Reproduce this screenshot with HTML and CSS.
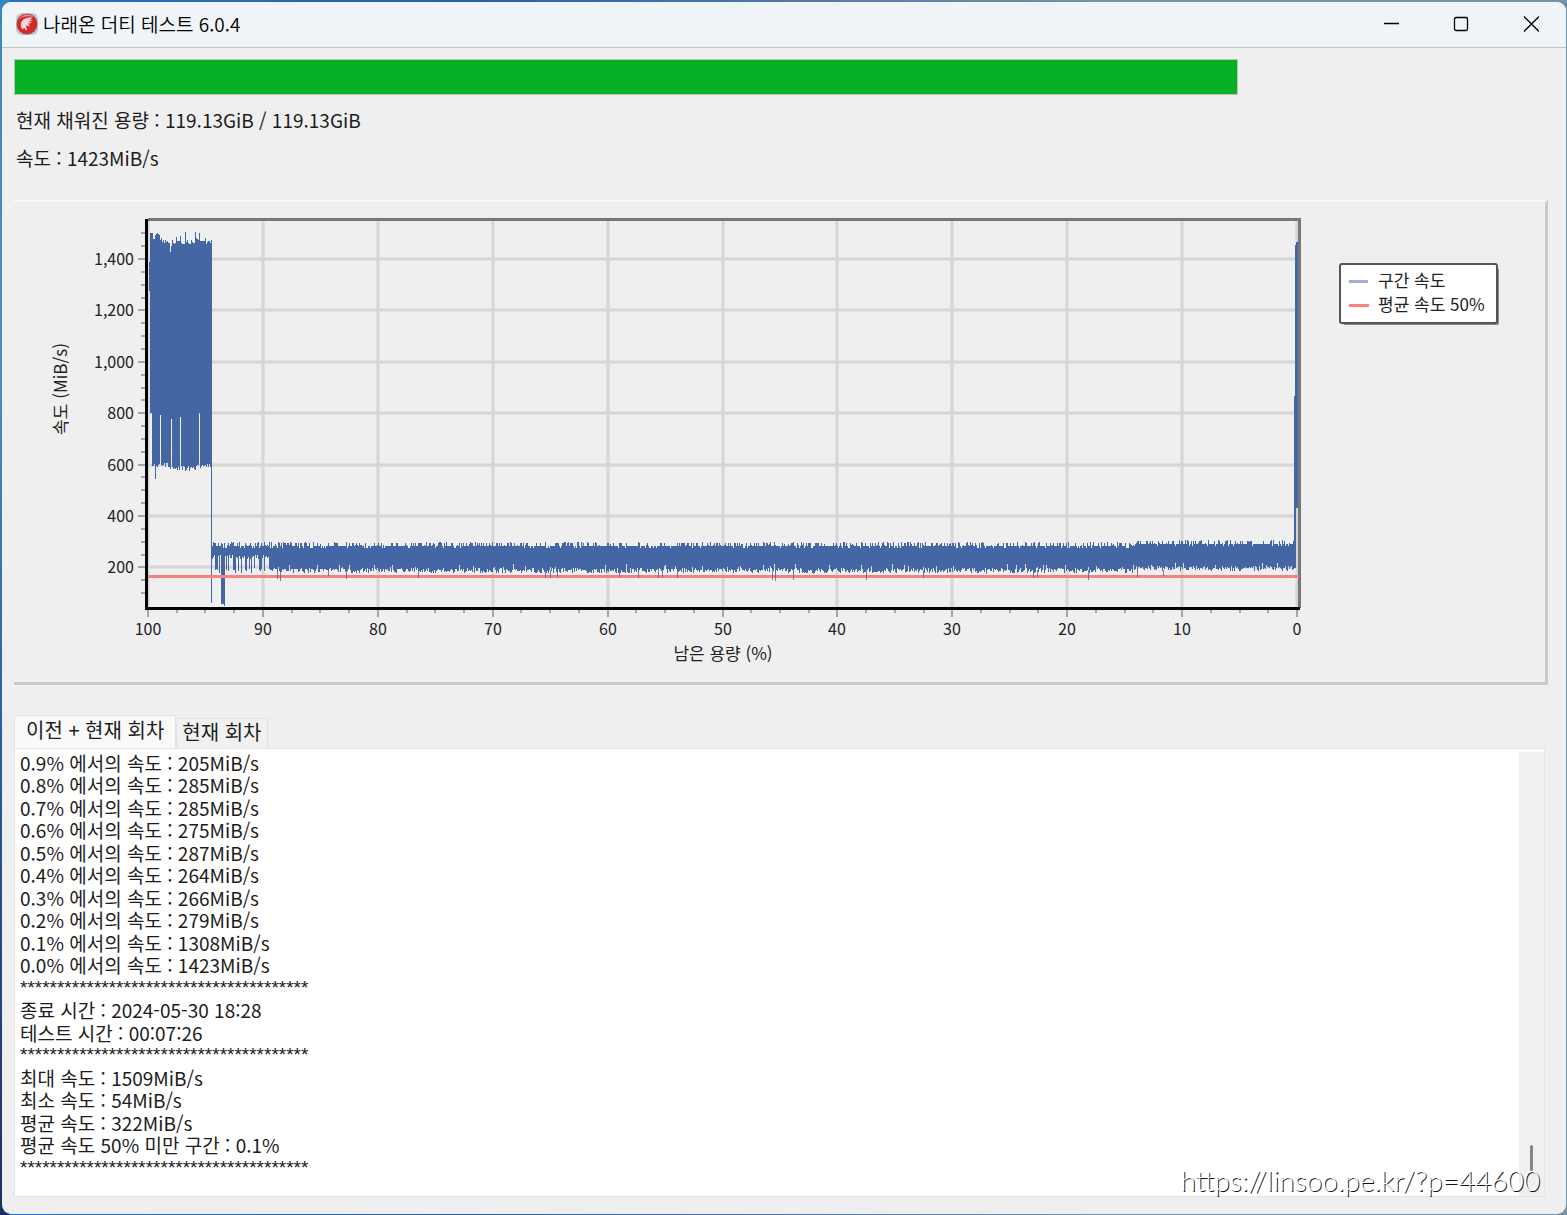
FILE: index.html
```html
<!DOCTYPE html>
<html lang="ko">
<head>
<meta charset="utf-8">
<meta name="viewport" content="width=device-width, initial-scale=1">
<title>나래온 더티 테스트 6.0.4</title>
<link rel="stylesheet" href="styles.css">
</head>
<body>
<div class="window">
  <header class="titlebar">
    <svg class="app-icon" viewBox="0 0 24 24" aria-hidden="true">
      <rect x="1" y="1" width="22" height="22" rx="6" fill="#c9c5c5"/>
      <circle cx="12" cy="12" r="10.500" fill="#8f6264"/>
      <circle cx="12" cy="12" r="9.800" fill="#d9252c"/>
      <path d="M4 8a9 9 0 0 1 15-2.500C14 3.500 7 4 4 8z" fill="#ef8587"/>
      <path d="M17.500 5.500c-5-.5-10 1-11.500 5.500-.8 3 .2 5.500 2 6.500l1-2 2 3 1-.5-1-4.500 4 1-2-3 4-.5-3-1.500 4-1.500-3-.5z" fill="#f9d5d3"/>
    </svg>
    <h1 class="title">나래온 더티 테스트 6.0.4</h1>
    <div class="controls">
      <button class="control" type="button" aria-label="최소화"><svg viewBox="0 0 16 16"><path d="M1 7.500h15"/></svg></button>
      <button class="control" type="button" aria-label="최대화"><svg viewBox="0 0 16 16"><rect x="1.500" y="1.500" width="13" height="13" rx="1.500"/></svg></button>
      <button class="control" type="button" aria-label="닫기"><svg viewBox="0 0 16 16"><path d="M1 .5l15 15M16 .5L1 15.500"/></svg></button>
    </div>
  </header>

  <main class="content">
    <progress class="fill-progress" max="100" value="100" aria-label="진행률"></progress>
    <p class="status">현재 채워진 용량 : 119.13GiB / 119.13GiB</p>
    <p class="status">속도 : 1423MiB/s</p>

    <section class="chart-panel">
      <svg class="chart" viewBox="0 0 1531 480" role="img" aria-label="남은 용량에 따른 속도">
        <g id="grid" class="grid"></g>
        <g id="ticks" class="ticks"></g>
        <path class="frame" d="M134 17.500H1285.500V406"/>
        <path id="speed" class="speed"/>
        <path class="average" d="M134 374.500H1285"/>
        <path id="dips" class="dips"/>
        <path class="axis" d="M132.500 17V406.500H1286"/>
        <g id="labels" class="labels"></g>
        <text class="caption" x="709" y="458" text-anchor="middle">남은 용량 (%)</text>
        <text class="caption" transform="translate(53 187) rotate(-90)" text-anchor="middle">속도 (MiB/s)</text>
        <rect class="legend-shadow" x="1329" y="66" width="156" height="57" rx="2"/>
        <rect class="legend-box" x="1326" y="62" width="157" height="59" rx="2"/>
        <path class="legend-speed" d="M1335 79.500h19"/>
        <path class="legend-average" d="M1335 103.500h20"/>
        <text class="caption" x="1364" y="85">구간 속도</text>
        <text class="caption" x="1364" y="109">평균 속도 50%</text>
      </svg>
    </section>

    <section class="log">
      <div class="tabs" role="tablist">
        <button class="tab tab-active" type="button" role="tab" aria-selected="true">이전 + 현재 회차</button>
        <button class="tab" type="button" role="tab" aria-selected="false">현재 회차</button>
      </div>
      <div class="log-page">
        <div class="log-text" role="log" aria-label="테스트 기록" tabindex="0">
          <p>0.9% 에서의 속도 : 205MiB/s</p>
          <p>0.8% 에서의 속도 : 285MiB/s</p>
          <p>0.7% 에서의 속도 : 285MiB/s</p>
          <p>0.6% 에서의 속도 : 275MiB/s</p>
          <p>0.5% 에서의 속도 : 287MiB/s</p>
          <p>0.4% 에서의 속도 : 264MiB/s</p>
          <p>0.3% 에서의 속도 : 266MiB/s</p>
          <p>0.2% 에서의 속도 : 279MiB/s</p>
          <p>0.1% 에서의 속도 : 1308MiB/s</p>
          <p>0.0% 에서의 속도 : 1423MiB/s</p>
          <p class="rule">***************************************</p>
          <p>종료 시간 : 2024-05-30 18:28</p>
          <p>테스트 시간 : 00:07:26</p>
          <p class="rule">***************************************</p>
          <p>최대 속도 : 1509MiB/s</p>
          <p>최소 속도 : 54MiB/s</p>
          <p>평균 속도 : 322MiB/s</p>
          <p>평균 속도 50% 미만 구간 : 0.1%</p>
          <p class="rule">***************************************</p>
        </div>
        <div class="scrollbar"><div class="thumb"></div></div>
      </div>
    </section>
  </main>
  <a class="watermark" href="https://linsoo.pe.kr/?p=44600">https://linsoo.pe.kr/?p=44600</a>
</div>
<script src="chart.js"></script>
</body>
</html>
```

FILE: styles.css
```css
* {
  box-sizing: border-box;
}

html,
body {
  height: 100%;
}

body {
  margin: 0;
  padding: 2px 1px 1px 2px;
  background:
    linear-gradient(#3c86c0, #4a90c0 30%, #2a5cab 60%, #1c2f66) left / 9px 100% no-repeat,
    linear-gradient(to right, #2b71c4, #2b5ea9 30%, #7890a8 70%, #7890a8);
  color: #1c1c1c;
  font-family: "Noto Sans CJK KR", "Noto Sans", sans-serif;
  font-size: 19px;
}

.window {
  position: relative;
  display: flex;
  flex-direction: column;
  min-height: 100%;
  overflow: hidden;
  border-radius: 9px;
  background: #efefef;
}

.titlebar {
  display: flex;
  align-items: center;
  height: 46px;
  padding-bottom: 2px;
  padding-left: 13px;
  border-bottom: 1px solid #bfc5ca;
  background: #eff4f9;
  color: #000;
}

.app-icon {
  width: 24px;
  height: 24px;
}

.title {
  flex: 1;
  margin: 0 0 0 4px;
  font-size: 19px;
  font-weight: 350;
  line-height: 24px;
}

.controls {
  display: flex;
}

.control {
  display: grid;
  place-items: center;
  width: 70px;
  height: 43px;
  padding: 0;
  border: 0;
  background: none;
}

.control svg {
  width: 16px;
  height: 16px;
  fill: none;
  stroke: #000;
  stroke-width: 1.300;
}

.content {
  display: flex;
  flex: 1;
  flex-direction: column;
  padding: 11px 18px 17px 12px;
}

.fill-progress {
  width: calc(80% - 3px);
  height: 36px;
  border: 1px solid #b5c9b5;
  background: #e6e6e6;
  appearance: none;
}

.fill-progress::-webkit-progress-bar {
  background: #e6e6e6;
}

.fill-progress::-webkit-progress-value {
  background: #06b025;
}

.status {
  margin: 12px 0 0 2px;
  line-height: 26px;
}

.chart-panel {
  margin-top: 29px;
  border-top: 2px solid #f8f8f8;
  border-right: 3px solid #c9c9c9;
  border-bottom: 3px solid #c9c9c9;
}

.chart {
  display: block;
  width: 100%;
}

.grid {
  fill: none;
  stroke: #d6d6d6;
  stroke-width: 3;
}

.ticks {
  stroke: #a5a5a5;
  stroke-width: 2;
}

.frame {
  fill: none;
  stroke: #777;
  stroke-width: 3;
}

.axis {
  fill: none;
  stroke: #000;
  stroke-width: 3;
}

.speed {
  fill: #4466a4;
  shape-rendering: crispEdges;
}

.average {
  stroke: #fa8080;
  stroke-width: 3;
}

.dips {
  fill: #4466a4;
  fill-opacity: .8;
  shape-rendering: crispEdges;
}

.labels {
  fill: #222;
  font-size: 16px;
}

.caption {
  fill: #222;
  font-size: 17px;
}

.legend-shadow {
  fill: #888;
}

.legend-box {
  fill: #fff;
  stroke: #555;
  stroke-width: 2;
}

.legend-speed {
  stroke: #a2afd2;
  stroke-width: 3;
}

.legend-average {
  stroke: #fa8080;
  stroke-width: 3;
}

.log {
  display: flex;
  flex: 1;
  flex-direction: column;
  margin-top: 30px;
  margin-right: 3px;
}

.tabs {
  display: flex;
  align-items: flex-end;
  height: 33px;
}

.tab {
  height: 30px;
  padding: 0 5px 3px;
  border: 1px solid #e3e3e3;
  border-bottom: 0;
  background: #f0f0f0;
  color: inherit;
  font: inherit;
  font-size: 20px;
  line-height: 26px;
}

.tab-active {
  height: 33px;
  padding: 0 11px 4px;
  background: #f9f9f9;
}

.log-page {
  display: flex;
  flex: 1;
  min-height: 448px;
  border: 1px solid #e5e5e5;
  background: #fff;
}

.log-text {
  flex: 1;
  padding: 3px 5px 0;
  outline: 0;
  line-height: 1.184;
}

.log-text p {
  margin: 0;
}

.log-text .rule {
  font-family: "Liberation Sans", sans-serif;
}

.scrollbar {
  display: flex;
  flex-direction: column;
  align-items: center;
  justify-content: flex-end;
  width: 25px;
  margin-top: 3px;
  padding-bottom: 25px;
  background: #f0f0f0;
}

.thumb {
  width: 3px;
  height: 26px;
  border-radius: 2px;
  background: #868686;
}

.watermark {
  position: absolute;
  right: 26px;
  bottom: 16px;
  color: #fff;
  font-family: Lato, "Noto Sans", sans-serif;
  font-size: 28px;
  font-weight: 300;
  line-height: 36px;
  text-decoration: none;
  text-shadow: 1px 1px 0 #111;
}
```

FILE: chart.js
```js
const svgNs = "http://www.w3.org/2000/svg";
const plot = { left: 133, right: 1283, top: 18, bottom: 406 };

const xOf = (percent) => Math.round(plot.right - percent * 11.49);
const yOf = (speed) => Math.round(416.8 - speed * 0.257);

function add(parent, name, attributes, text) {
  const node = document.createElementNS(svgNs, name);
  Object.entries(attributes).forEach(([key, value]) => node.setAttribute(key, value));
  if (text) node.textContent = text;
  document.getElementById(parent).appendChild(node);
}

// Axis grid, ticks and labels
for (let speed = 100; speed <= 1500; speed += 50) {
  const y = yOf(speed);
  const major = speed % 200 === 0;
  add("ticks", "path", { d: `M${major ? 124 : 127} ${y}H131` });
  if (major) {
    add("grid", "path", { d: `M${plot.left} ${y}H${plot.right}` });
    add("labels", "text", { x: 120, y: y + 6, "text-anchor": "end" }, speed.toLocaleString("en-US"));
  }
}
for (let percent = 0; percent <= 100; percent += 2.5) {
  const x = xOf(percent);
  const major = percent % 10 === 0;
  add("ticks", "path", { d: `M${x} 408V${major ? 415 : 411}` });
  if (major) {
    add("grid", "path", { d: `M${x} ${plot.top}V${plot.bottom}` });
    add("labels", "text", { x, y: 433, "text-anchor": "middle" }, String(percent));
  }
}

// Repeatable noise for the sampled speeds
let seed = 20240530;
const random = () => {
  seed = (seed * 1664525 + 1013904223) % 4294967296;
  return seed / 4294967296;
};

const bar = (x, top, bottom) => `M${x} ${top}h1V${bottom}h-1z`;
let speed = bar(135, 60, 89) + bar(136, 31, 211);

// Cached section: 1500 down to 600 MiB/s
const peaks = [31, 31, 37, 37, 36, 32, 31, 32, 33, 38, 36, 40, 38, 41, 38, 40, 39, 41, 41, 50, 44, 38, 41, 42, 41,
  35, 39, 39, 39, 34, 41, 42, 42, 42, 30, 40, 38, 41, 42, 42, 38, 40, 41, 41, 30, 36, 37, 38, 31, 39, 39, 39, 39, 39,
  36, 42, 40, 39, 39, 41];
const gaps = { 0: 211, 9: 213, 20: 217, 29: 215, 48: 211 };
peaks.forEach((top, i) => {
  const low = i > 17 && i < 45 ? 266 : 263;
  speed += bar(137 + i, top, gaps[i] || Math.round(low - 2 + random() * 5));
});
speed += bar(141, 33, 277) + bar(197, 38, 401);

// Steady section
for (let x = 198; x < 1281; x += 1) {
  const shift = x > 1120 ? -2 : 0;
  const noise = random();
  const top = 344 + shift - (noise > 0.92 ? 4 : noise > 0.6 ? 3 : 0) + (random() > 0.8 ? 2 : 0);
  let bottom = 366 + shift + Math.round(random() * 5) - (random() > 0.9 ? 4 : 0);
  if (x < 255 && random() > 0.4) bottom = 353 + Math.round(random() * 4);
  speed += bar(x, top, bottom);
}
speed += "M207 350h4V404h-1V402h-3z";
speed += "M1280 194h1V43h1V40h2V306h-2V366h-2z";
document.getElementById("speed").setAttribute("d", speed);

const dips = [[263, 377], [266, 379], [314, 374], [332, 377], [404, 376], [531, 376], [536, 376], [543, 375],
  [605, 375], [624, 376], [644, 376], [648, 375], [663, 376], [758, 378], [761, 379], [779, 378], [799, 372],
  [852, 378], [909, 376], [972, 372], [1019, 376], [1023, 375], [1074, 378], [1123, 375], [1149, 374]];
document.getElementById("dips").setAttribute("d", dips.map(([x, y]) => bar(x, 368, y)).join(""));
```
